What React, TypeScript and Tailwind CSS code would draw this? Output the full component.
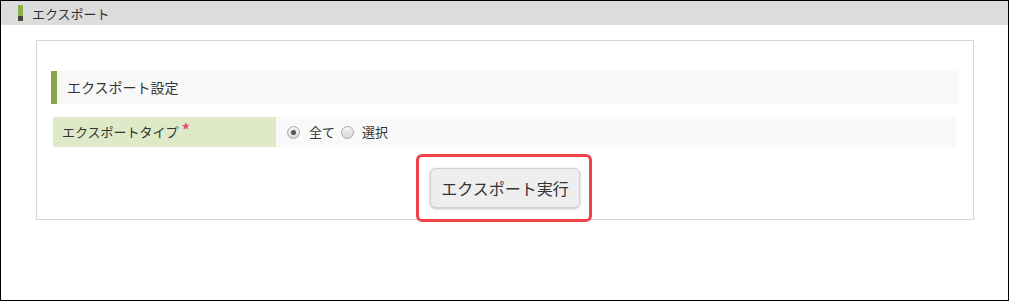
import React from "react";

const font = { fontFamily: '"Noto Sans CJK JP", "Noto Sans", sans-serif' };

function Radio({ checked = false }: { checked?: boolean }) {
  return (
    <span className="flex h-[13px] w-[13px] items-center justify-center rounded-full border border-[#a8a8a8] bg-gradient-to-b from-[#f4f4f4] to-[#d8d8d8]">
      {checked && <span className="h-[5px] w-[5px] rounded-full bg-[#555]" />}
    </span>
  );
}

export default function App() {
  return (
    <div
      className="box-border h-[301px] w-[1009px] border border-black bg-white text-[#333]"
      style={font}
    >
      <div className="flex h-[24px] items-center bg-[#dcdcdc]">
        <span className="ml-[17px] flex h-[16px] w-[5px] flex-col">
          <span className="h-[11px] bg-[#8ab04a]" />
          <span className="h-[5px] bg-[#3f4a3b]" />
        </span>
        <span className="ml-[9px] text-[13px] leading-none">エクスポート</span>
      </div>

      <div className="ml-[35px] mt-[15px] box-border h-[180px] w-[938px] border border-[#d6d6d6] px-[14px] pt-[30px]">
        <div className="flex h-[33px] items-center border-l-[6px] border-[#86a84a] bg-[#f8f8f8] pl-[10px] text-[14px]">
          エクスポート設定
        </div>

        <div className="ml-[2px] mr-[3px] mt-[13px] flex h-[30px] text-[13px]">
          <div className="flex w-[223px] items-center bg-[#dde9c7] pl-[9px]">
            エクスポートタイプ
            <span className="relative -top-[3px] ml-[3px] text-[16px] font-bold leading-none text-[#ec4a6e]">*</span>
          </div>
          <div className="flex flex-1 items-center bg-[#f9f9f9] pl-[11px]">
            <Radio checked />
            <span className="ml-[9px]">全て</span>
            <span className="ml-[6px]"><Radio /></span>
            <span className="ml-[8px]">選択</span>
          </div>
        </div>

        <div className="mt-[21px] flex justify-center">
          <div className="relative">
            <button className="h-[40px] w-[150px] rounded-[6px] border border-[#cfcfcf] bg-[#eeeeee] text-[16px] text-[#333] shadow-[0_1px_3px_rgba(0,0,0,0.25)]">
              エクスポート実行
            </button>
            <span className="pointer-events-none absolute -bottom-[14px] -left-[14px] -right-[12px] -top-[14px] rounded-[6px] border-[3px] border-[#f2434b]" />
          </div>
        </div>
      </div>
    </div>
  );
}
